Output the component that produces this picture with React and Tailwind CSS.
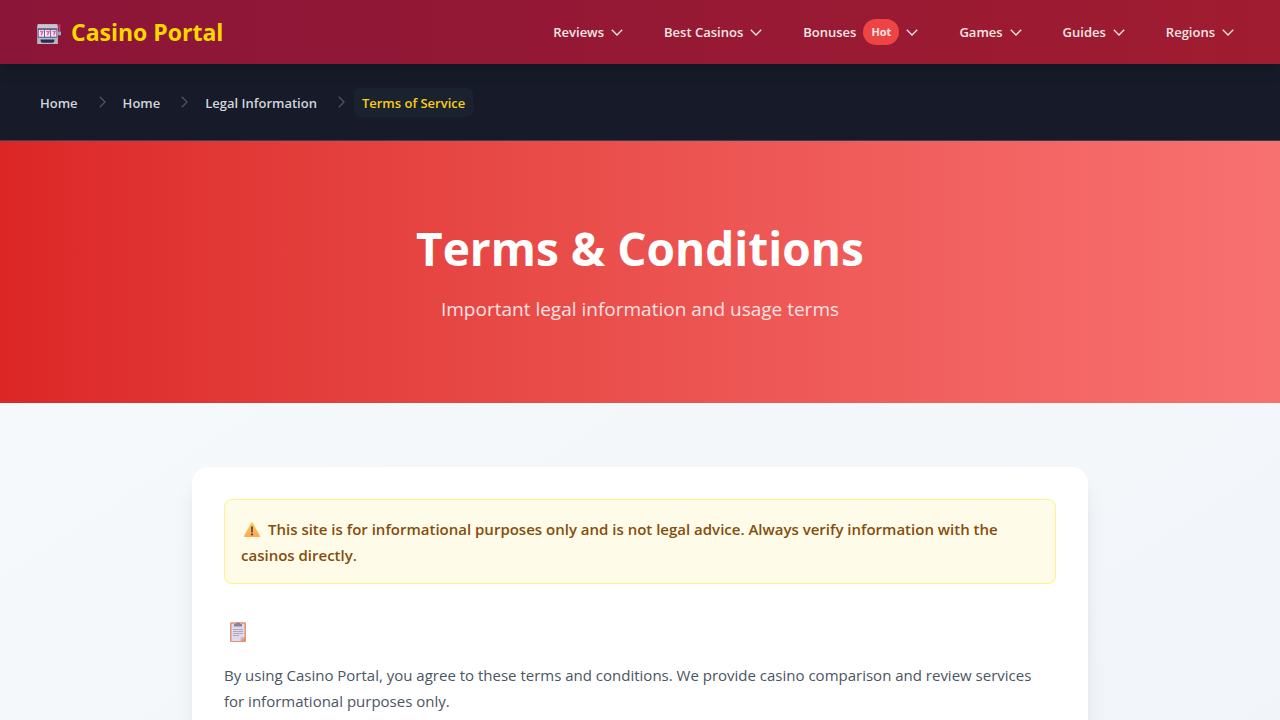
const navItems = [
  { label: "Reviews" },
  { label: "Best Casinos" },
  { label: "Bonuses", badge: "Hot" },
  { label: "Games" },
  { label: "Guides" },
  { label: "Regions" },
];

const crumbs = ["Home", "Home", "Legal Information"];

function SlotMachine() {
  return (
    <svg viewBox="0 0 24 20" className="mt-1 h-5 w-6 shrink-0" aria-hidden="true">
      <path d="M20.500 7.500H24v3.800h-3.500z" fill="#a8a3b4" />
      <path d="M21.700 2h1.400v6h-1.400z" fill="#a06a80" />
      <circle cx="22.300" cy="1.800" r="1.700" fill="#d3244b" />
      <path d="M.8.2h19.400l.7 4.300V20H.2V4.500z" fill="#b9b6c0" />
      <path d="M.8.2h19.400l.6 3.800H.3z" fill="#c9c6ce" />
      <rect x=".8" y="4.200" width="19.400" height="9.600" rx="1" fill="#555a93" />
      <rect x="1.700" y="5.900" width="5.300" height="6.800" fill="#f3eaf6" />
      <rect x="7.900" y="5.900" width="5.300" height="6.800" fill="#f3eaf6" />
      <rect x="14.100" y="5.900" width="5.300" height="6.800" fill="#f3eaf6" />
      <path
        d="M3 7.600h2.700L4.300 11.300M9.200 7.600h2.700L10.500 11.300M15.400 7.600h2.700L16.700 11.300"
        fill="none"
        stroke="#ec5f96"
        strokeWidth="1.500"
      />
      <path d="M3.600 15.400h13.800v1.400q0 2-2.200 2H5.800q-2.200 0-2.200-2z" fill="#2b2a57" />
    </svg>
  );
}

function Warning() {
  return (
    <svg viewBox="0 0 16 15" className="mr-2 ml-[3px] inline h-[15px] w-4 align-[-2px]" aria-hidden="true">
      <defs>
        <linearGradient id="warn" x1="0" y1="0" x2="0" y2="1">
          <stop offset="0" stopColor="#ffc657" />
          <stop offset="1" stopColor="#ffa650" />
        </linearGradient>
      </defs>
      <path d="M7.200.8Q8 0 8.800.8L16 14q0 .9-.8.9H.8Q0 14.900 0 14z" fill="url(#warn)" />
      <path d="M7 4.400h2L8.800 10.400H7.200z" fill="#5c4b51" />
      <circle cx="8" cy="12.400" r="1.100" fill="#5c4b51" />
    </svg>
  );
}

function Clipboard() {
  return (
    <svg viewBox="0 0 16 20" className="ml-[6px] h-5 w-4" role="img" aria-label="Terms">
      <rect x="0" y="0.300" width="16" height="19.700" rx="1" fill="#df9570" />
      <path d="M1.500 1.800h13v13.400l-4 3.800h-9z" fill="#e2d8ee" />
      <path d="M14.500 15.200l-4 3.800v-3.800z" fill="#c8b5cf" />
      <path d="M4 2h1.600L6.500.8h.7Q8 -.5 8.800.8h.7l.9 1.200H12v2.600H4z" fill="#8a8291" />
      <path d="M3 7.500h10M3 9.500h10M3 11.500h10M3 13.500h6" stroke="#b0a6bf" strokeWidth="1" />
    </svg>
  );
}

function ChevronDown() {
  return (
    <svg viewBox="0 0 12 7" className="h-[7px] w-3" fill="none" stroke="currentColor" strokeWidth="1.300" aria-hidden="true">
      <path d="M.8.8 6 6 11.200.8" />
    </svg>
  );
}

function ChevronRight() {
  return (
    <svg viewBox="0 0 7 12" className="mr-[9px] ml-[13px] mb-px h-3 w-[7px] text-[#4b5563]" fill="none" stroke="currentColor" strokeWidth="1.300" aria-hidden="true">
      <path d="M.8.8 6 6 .8 11.200" />
    </svg>
  );
}

export default function App() {
  return (
    <div className="min-h-screen bg-linear-to-br from-[#f8fafc] to-[#f1f5f9] font-['Open_Sans','Noto_Sans',sans-serif]">
      <header className="relative z-10 flex h-16 items-center justify-between bg-linear-to-r from-[#8b1538] to-[#a01c30] pr-[46px] pl-[37px] shadow-lg">
        <a href="#" className="flex items-center gap-[10px] text-[23px] leading-8 font-bold text-[#ffd700]">
          <SlotMachine />
          Casino Portal
        </a>
        <nav className="flex items-center gap-[41px]">
          {navItems.map((item) => (
            <button key={item.label} type="button" className="flex items-center gap-[7px] text-[13px] font-semibold text-[#f9e7e5]">
              <span className="pt-[2px]">{item.label}</span>
              {item.badge && (
                <span className="rounded-full bg-[#ef4444] px-2 py-1 text-[11px] leading-[18px] font-bold">
                  {item.badge}
                </span>
              )}
              <ChevronDown />
            </button>
          ))}
        </nav>
      </header>

      <nav aria-label="Breadcrumb" className="border-b border-[#374151] bg-[#171a28] px-8 pt-6 pb-[23px]">
        <ol className="flex items-center text-[13px] leading-[20px] font-semibold text-[#d1d5db]">
          {crumbs.map((label, i) => (
            <li key={i} className="flex items-center">
              <a href="#" className="px-2 pt-[5px] pb-1">{label}</a>
              <ChevronRight />
            </li>
          ))}
          <li aria-current="page" className="rounded-md bg-[#1a222f] px-2 pt-[5px] pb-1 text-[#facc15]">
            Terms of Service
          </li>
        </ol>
      </nav>

      <section className="bg-linear-to-r from-[#dc2626] to-[#f87171] px-4 py-20 text-center">
        <h1 className="mb-5 text-[46px] leading-[54px] font-bold text-white">Terms &amp; Conditions</h1>
        <p className="text-[19px] leading-7 text-[#fee2e2]">Important legal information and usage terms</p>
      </section>

      <main className="px-4 py-16">
        <article className="mx-auto max-w-4xl rounded-2xl bg-white p-8 text-[15px] leading-[26px] shadow-xl">
          <p className="mb-8 rounded-lg border border-[#fef08a] bg-[#fefce8] px-4 pt-4 pb-[15px] font-semibold text-[#854d0e]">
            <Warning />
            This site is for informational purposes only and is not legal advice. Always verify information with the casinos directly.
          </p>
          <h2 className="mb-[14px] flex h-8 items-center"><Clipboard /></h2>
          <p className="pr-4 text-[#4b5563]">
            By using Casino Portal, you agree to these terms and conditions. We provide casino comparison and review services for informational purposes only.
          </p>
        </article>
      </main>
    </div>
  );
}
